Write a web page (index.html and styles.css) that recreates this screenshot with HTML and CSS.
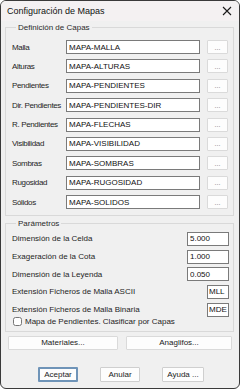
FILE: index.html
```html
<!DOCTYPE html>
<html lang="es">
<head>
  <meta charset="UTF-8">
  <title>Configuración de Mapas</title>
  <link rel="stylesheet" href="styles.css">
</head>
<body>
  <div class="window">
    <div class="titlebar">
      <span class="title">Configuración de Mapas</span>
      <svg class="close" width="10" height="10" viewBox="0 0 10 10">
        <path d="M1 1 L9 9 M9 1 L1 9" stroke="#1a1a1a" stroke-width="1.1" fill="none"/>
      </svg>
    </div>

    <div class="content">
      <fieldset class="group layers">
        <legend>Definición de Capas</legend>
        <div class="layer-row"><label>Malla</label><input type="text" value="MAPA-MALLA"><button class="browse">...</button></div>
        <div class="layer-row"><label>Alturas</label><input type="text" value="MAPA-ALTURAS"><button class="browse">...</button></div>
        <div class="layer-row"><label>Pendientes</label><input type="text" value="MAPA-PENDIENTES"><button class="browse">...</button></div>
        <div class="layer-row"><label>Dir. Pendientes</label><input type="text" value="MAPA-PENDIENTES-DIR"><button class="browse">...</button></div>
        <div class="layer-row"><label>R. Pendientes</label><input type="text" value="MAPA-FLECHAS"><button class="browse">...</button></div>
        <div class="layer-row"><label>Visibilidad</label><input type="text" value="MAPA-VISIBILIDAD"><button class="browse">...</button></div>
        <div class="layer-row"><label>Sombras</label><input type="text" value="MAPA-SOMBRAS"><button class="browse">...</button></div>
        <div class="layer-row"><label>Rugosidad</label><input type="text" value="MAPA-RUGOSIDAD"><button class="browse">...</button></div>
        <div class="layer-row"><label>Sólidos</label><input type="text" value="MAPA-SOLIDOS"><button class="browse">...</button></div>
      </fieldset>

      <fieldset class="group params">
        <legend>Parámetros</legend>
        <div class="param-row"><label>Dimensión de la Celda</label><input type="text" class="num" value="5.000"></div>
        <div class="param-row"><label>Exageración de la Cota</label><input type="text" class="num" value="1.000"></div>
        <div class="param-row"><label>Dimensión de la Leyenda</label><input type="text" class="num" value="0.050"></div>
        <div class="param-row"><label>Extensión Ficheros de Malla ASCII</label><input type="text" class="ext" value="MLL"></div>
        <div class="param-row"><label>Extensión Ficheros de Malla Binaria</label><input type="text" class="ext" value="MDE"></div>
        <label class="check"><input type="checkbox"><span>Mapa de Pendientes. Clasificar por Capas</span></label>
      </fieldset>

      <div class="extra-buttons">
        <button>Materiales...</button>
        <button>Anaglifos...</button>
      </div>

      <div class="dialog-buttons">
        <button class="default">Aceptar</button>
        <button>Anular</button>
        <button>Ayuda ...</button>
      </div>
    </div>
  </div>
</body>
</html>
```

FILE: styles.css
```css
body {
  margin: 0;
  padding: 0;
  background: #ffffff;
  font-family: "Liberation Sans", Arial, sans-serif;
  font-size: 8px;
  color: #1e1e1e;
}

.window {
  width: 240px;
  height: 389px;
  box-sizing: border-box;
  border: 1px solid #3a3a3a;
  border-radius: 6px;
  background: #f0f0f0;
  overflow: hidden;
  display: flex;
  flex-direction: column;
}

.titlebar {
  height: 20px;
  background: #f4f1f2;
  display: flex;
  align-items: center;
  justify-content: space-between;
  padding: 0 6px 0 6px;
}

.title {
  font-size: 9px;
  color: #111;
}

.close {
  margin-right: 1px;
}

.content {
  padding: 2px 5px 0 4px;
  display: flex;
  flex-direction: column;
}

.group {
  margin: 0;
  padding: 0;
  border: 1px solid #d9d9d9;
  border-radius: 0;
  min-width: 0;
}

.group legend {
  padding: 0 2px;
  margin-left: 4px;
  font-size: 8px;
  color: #2a2a2a;
}

.layers {
  padding: 8px 4px 6px 6px;
  display: flex;
  flex-direction: column;
  gap: 5.4px;
}

.layer-row {
  display: flex;
  align-items: center;
  height: 14px;
}

.layer-row label {
  width: 54px;
  flex: none;
  white-space: nowrap;
  letter-spacing: -0.35px;
}

input[type="text"] {
  box-sizing: border-box;
  height: 14px;
  margin: 0;
  padding: 0 2px;
  border: 1px solid #7a7a7a;
  background: #fff;
  font-family: "Liberation Sans", Arial, sans-serif;
  font-size: 8px;
  color: #111;
  border-radius: 0;
  outline: none;
}

.layer-row input {
  width: 134px;
}

button {
  box-sizing: border-box;
  margin: 0;
  padding: 0;
  height: 14px;
  border: 1px solid #dadada;
  background: #fdfdfd;
  font-family: "Liberation Sans", Arial, sans-serif;
  font-size: 8px;
  color: #222;
  border-radius: 1px;
}

.browse {
  width: 21px;
  margin-left: 7px;
  color: #777;
  font-size: 7px;
}

.params {
  margin-top: 3px;
  padding: 4px 4px 4px 6px;
  display: flex;
  flex-direction: column;
  gap: 4.2px;
}

.param-row {
  display: flex;
  align-items: center;
  justify-content: space-between;
  height: 13.5px;
}

.param-row label {
  white-space: nowrap;
}

.num {
  width: 42px;
  height: 13px;
}

input.ext {
  width: 22px;
  height: 14px;
  padding: 0 1px;
}

.check {
  display: flex;
  align-items: center;
  height: 11px;
  margin-top: -5px;
}

.check input {
  margin: 0 3px 0 1px;
  width: 9px;
  height: 9px;
}

.extra-buttons {
  display: flex;
  gap: 8px;
  margin: 4px 2px 0 3px;
}

.extra-buttons button {
  flex: 1;
}

.extra-buttons button:first-child {
  flex: 0 0 110px;
}

.dialog-buttons {
  display: flex;
  justify-content: center;
  gap: 22px;
  margin-top: 17px;
  padding-left: 3px;
}

.dialog-buttons button {
  width: 40px;
  height: 15px;
  border-color: #cfcfcf;
}

.dialog-buttons button:last-child {
  width: 42px;
}

.dialog-buttons .default {
  border: 2px solid #6f94b8;
}
```
